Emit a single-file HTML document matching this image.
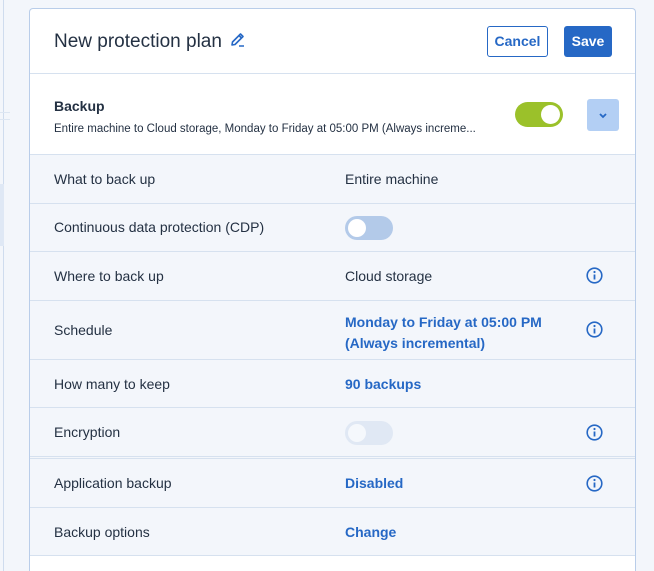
<!DOCTYPE html>
<html style="overflow:hidden;height:571px"><head><style>
*{margin:0;padding:0;box-sizing:border-box}
body{width:654px;height:571px;background:#f3f6fb;font-family:"Liberation Sans",sans-serif;color:#243143;position:relative;overflow:hidden}
.lstrip{position:absolute;left:0;top:0;width:4px;height:571px;border-right:1px solid #cfdcee}
.card{position:absolute;left:29px;top:8px;width:607px;height:563px;background:#fff;border:1px solid #b9cde9;border-bottom:none;border-radius:4px 4px 0 0;overflow:hidden}
.hdr{height:65px;border-bottom:1px solid #d6e1ef;position:relative}
.title{position:absolute;left:24px;top:22px;font-size:19px}
.btn{position:absolute;top:17px;height:31px;border-radius:3px;font-size:14px;font-weight:bold;line-height:29px;text-align:center}
.bk{height:81px;border-bottom:1px solid #d6e1ef;position:relative}
.row{background:#f3f6fb;border-bottom:1px solid #d6e1ef;position:relative;font-size:14px}
.row .l{position:absolute;left:24px}
.row .v{position:absolute;left:315px}
.blue{color:#2668c5;font-weight:bold}
.info{position:absolute;left:556px;width:17px;height:17px}
.tg{position:absolute;left:315px;width:48px;height:24px;border-radius:12px}
.tg i{position:absolute;left:3px;top:3px;width:18px;height:18px;border-radius:50%;background:#fff}
</style></head><body>
<div class="lstrip"></div>
<div style="position:absolute;left:0;top:112px;width:10px;height:1px;background:#dde6f2"></div>
<div style="position:absolute;left:0;top:119px;width:10px;height:1px;background:#dde6f2"></div>
<div style="position:absolute;left:0;top:184px;width:4px;height:62px;background:#dfe8f5"></div>
<div class="card">
 <div class="hdr">
  <div class="title">New protection plan <svg width="16" height="16" viewBox="0 0 16 16" style="vertical-align:-1px;margin-left:3px"><path d="M2 13 L2.5 10 L10.5 2 L13 4.5 L5 12.5 Z M9 3.5 L11.5 6" fill="none" stroke="#2668c5" stroke-width="1.6" stroke-linejoin="round"/><path d="M9 14 H14" stroke="#2668c5" stroke-width="1.6"/></svg></div>
  <div class="btn" style="left:457px;width:61px;border:1px solid #2668c5;color:#2668c5;background:#fff">Cancel</div>
  <div class="btn" style="left:534px;width:48px;background:#2668c5;color:#fff;line-height:31px">Save</div>
 </div>
 <div class="bk">
  <div style="position:absolute;left:24px;top:24px;font-size:14px;font-weight:bold">Backup</div>
  <div style="position:absolute;left:24px;top:49px;font-size:11.5px;white-space:nowrap">Entire machine to Cloud storage, Monday to Friday at 05:00 PM (Always increme...</div>
  <div style="position:absolute;left:485px;top:28px;width:48px;height:25px;border-radius:13px;background:#9bc12a"><i style="position:absolute;right:3px;top:3px;width:19px;height:19px;border-radius:50%;background:#fff"></i></div>
  <div style="position:absolute;left:557px;top:25px;width:32px;height:32px;border-radius:3px;background:#b3cff4"><svg width="32" height="32"><path d="M13 15 L16 18 L19 15" fill="none" stroke="#2668c5" stroke-width="1.8"/></svg></div>
 </div>
 <div class="row" style="height:49px"><span class="l" style="top:16px">What to back up</span><span class="v" style="top:16px">Entire machine</span></div>
 <div class="row" style="height:48px"><span class="l" style="top:15px">Continuous data protection (CDP)</span><div class="tg" style="top:12px;background:#b3cae9"><i></i></div></div>
 <div class="row" style="height:49px"><span class="l" style="top:16px">Where to back up</span><span class="v" style="top:16px">Cloud storage</span><svg class="info" style="top:15px" viewBox="0 0 17 17"><circle cx="8.5" cy="8.5" r="7.3" fill="none" stroke="#2668c5" stroke-width="1.6"/><circle cx="8.5" cy="5" r="1.1" fill="#2668c5"/><path d="M8.5 7.5V12.5" stroke="#2668c5" stroke-width="1.8"/></svg></div>
 <div class="row" style="height:59px"><span class="l" style="top:21px">Schedule</span><span class="v blue" style="top:11px;line-height:21px">Monday to Friday at 05:00 PM<br>(Always incremental)</span><svg class="info" style="top:20px" viewBox="0 0 17 17"><circle cx="8.5" cy="8.5" r="7.3" fill="none" stroke="#2668c5" stroke-width="1.6"/><circle cx="8.5" cy="5" r="1.1" fill="#2668c5"/><path d="M8.5 7.5V12.5" stroke="#2668c5" stroke-width="1.8"/></svg></div>
 <div class="row" style="height:48px"><span class="l" style="top:16px">How many to keep</span><span class="v blue" style="top:16px">90 backups</span></div>
 <div class="row" style="height:51px;border-bottom:3px double #d6e1ef"><span class="l" style="top:16px">Encryption</span><div class="tg" style="top:13px;background:#e0e8f4"><i style="background:#f5f8fc"></i></div><svg class="info" style="top:16px" viewBox="0 0 17 17"><circle cx="8.5" cy="8.5" r="7.3" fill="none" stroke="#2668c5" stroke-width="1.6"/><circle cx="8.5" cy="5" r="1.1" fill="#2668c5"/><path d="M8.5 7.5V12.5" stroke="#2668c5" stroke-width="1.8"/></svg></div>
 <div class="row" style="height:49px"><span class="l" style="top:16px">Application backup</span><span class="v blue" style="top:16px">Disabled</span><svg class="info" style="top:16px" viewBox="0 0 17 17"><circle cx="8.5" cy="8.5" r="7.3" fill="none" stroke="#2668c5" stroke-width="1.6"/><circle cx="8.5" cy="5" r="1.1" fill="#2668c5"/><path d="M8.5 7.5V12.5" stroke="#2668c5" stroke-width="1.8"/></svg></div>
 <div class="row" style="height:48px"><span class="l" style="top:16px">Backup options</span><span class="v blue" style="top:16px">Change</span></div>
</div>
</body></html>
